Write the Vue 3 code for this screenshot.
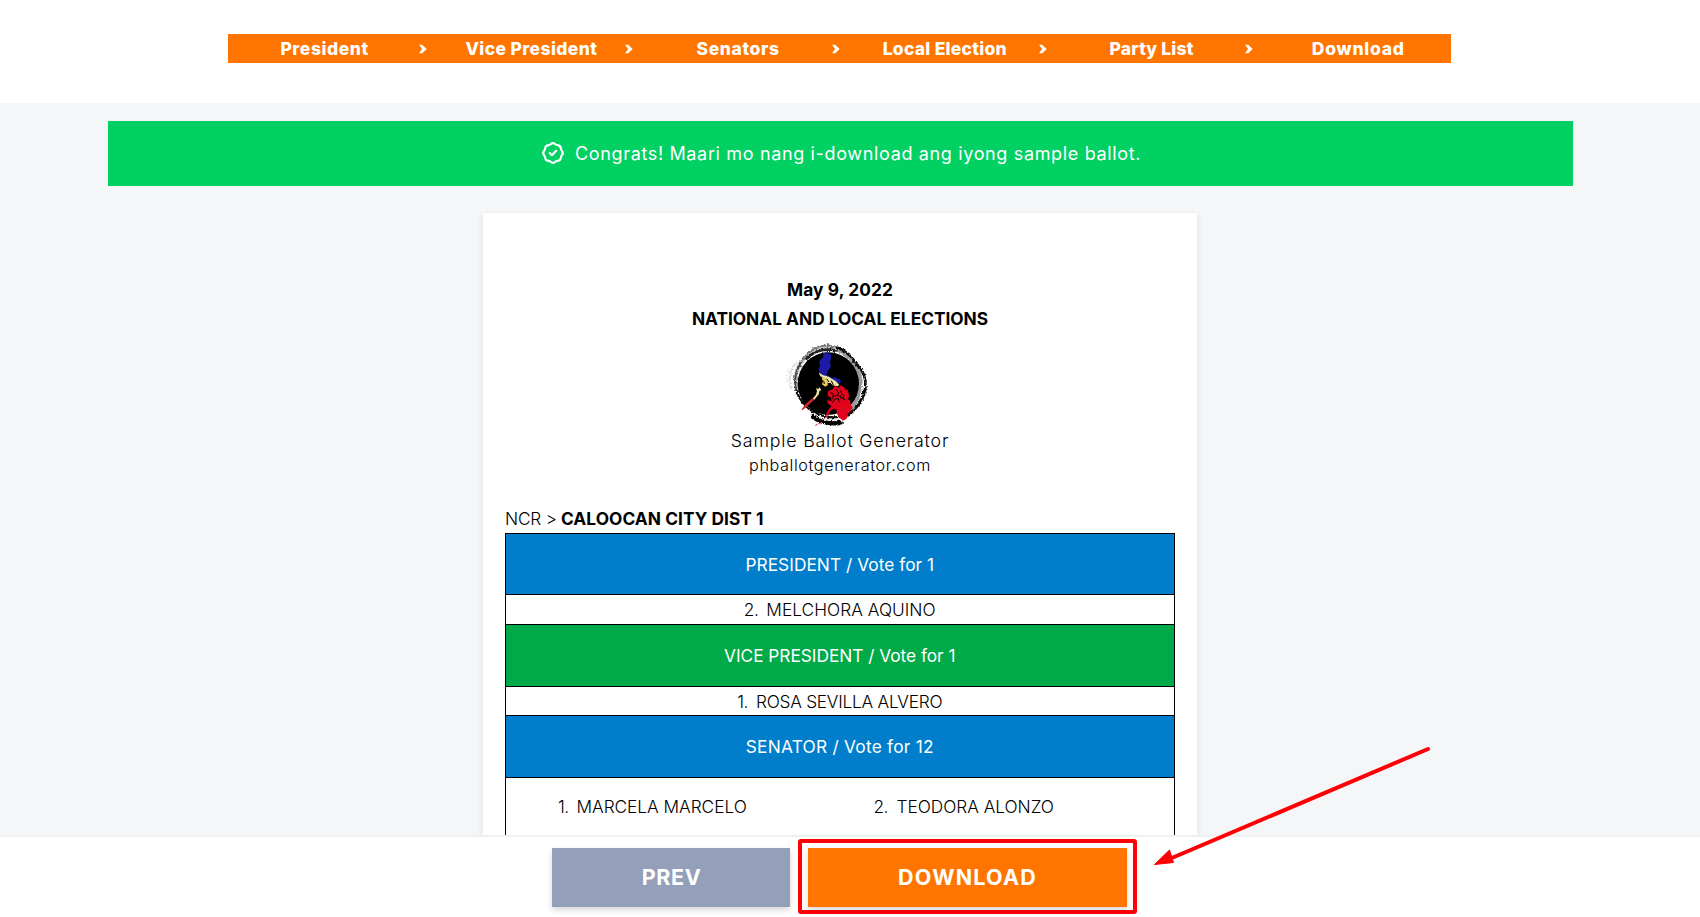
<script setup>
const steps = [
  { label: 'President', tracking: 0.58 },
  { label: 'Vice President', tracking: 0.38 },
  { label: 'Senators', tracking: 0.6 },
  { label: 'Local Election', tracking: 0.26 },
  { label: 'Party List', tracking: 0.15 },
  { label: 'Download', tracking: 0.76 },
]

const races = [
  { title: 'PRESIDENT / Vote for 1', tone: 'blue', tracking: 0.04, number: '2.', name: 'MELCHORA AQUINO', nameTracking: 0.04 },
  { title: 'VICE PRESIDENT / Vote for 1', tone: 'green', tracking: -0.03, number: '1.', name: 'ROSA SEVILLA ALVERO', nameTracking: -0.25 },
]
</script>

<template>
  <div class="page">
    <header class="top">
      <nav class="steps">
        <template v-for="(step, i) in steps" :key="step.label">
          <span v-if="i" class="sep">
            <svg viewBox="0 0 8 10" width="8" height="10"><path d="M1.2 1.4H3L6.8 5 3 8.6H1.2L3.8 5Z" /></svg>
          </span>
          <a class="step" :style="{ letterSpacing: step.tracking + 'px' }">{{ step.label }}</a>
        </template>
      </nav>
    </header>

    <main class="body">
      <div class="banner">
        <svg class="seal" viewBox="0 0 24 24">
          <path d="M9 12l2 2 4-4M7.835 4.697a3.42 3.42 0 001.946-.806 3.42 3.42 0 014.438 0 3.42 3.42 0 001.946.806 3.42 3.42 0 013.138 3.138 3.42 3.42 0 00.806 1.946 3.42 3.42 0 010 4.438 3.42 3.42 0 00-.806 1.946 3.42 3.42 0 01-3.138 3.138 3.42 3.42 0 00-1.946.806 3.42 3.42 0 01-4.438 0 3.42 3.42 0 00-1.946-.806 3.42 3.42 0 01-3.138-3.138 3.42 3.42 0 00-.806-1.946 3.42 3.42 0 010-4.438 3.42 3.42 0 00.806-1.946 3.42 3.42 0 013.138-3.138z" />
        </svg>
        <span>Congrats! Maari mo nang i-download ang iyong sample ballot.</span>
      </div>

      <section class="ballot">
        <h2 class="date">May 9, 2022</h2>
        <h2 class="title">NATIONAL AND LOCAL ELECTIONS</h2>
        <svg class="logo" viewBox="50 36 250 254">
          <defs>
            <filter id="brush" x="-10%" y="-10%" width="120%" height="120%">
              <feTurbulence type="fractalNoise" baseFrequency="0.16" numOctaves="3" seed="4" result="n" />
              <feDisplacementMap in="SourceGraphic" in2="n" scale="11" xChannelSelector="R" yChannelSelector="G" />
            </filter>
          </defs>
          <g filter="url(#brush)" fill="none" stroke-linecap="round">
            <path d="M196 56c40 10 60 44 70 66 12 34 6 84-28 120" stroke="#9a9a9a" stroke-width="14" />
            <path d="M82 180C70 130 92 82 138 60c22-10 46-10 66-4" stroke="#c4c4c4" stroke-width="12" />
            <path d="M98 90C124 54 160 42 188 48c20 3 34 12 44 22" stroke="#777" stroke-width="6" stroke-dasharray="14 2 25 3" />
            <path d="M112 86C134 62 168 54 200 62" stroke="#222" stroke-width="8" stroke-dasharray="22 3 9 2" />
            <path d="M206 54c30 10 46 34 58 52 16 14 27 38 24 66-3 36-24 62-52 84" stroke="#111" stroke-width="8" />
            <path d="M84 96C62 116 56 146 66 176" stroke="#d4d4d4" stroke-width="5" stroke-dasharray="3 6 8 7" />
            <path d="M96 98C80 118 72 150 82 184" stroke="#444" stroke-width="6" stroke-dasharray="12 4 6 3" />
            <path d="M60 116c-8 16-8 30-6 46" stroke="#ccc" stroke-width="2.5" stroke-dasharray="2 8" />
            <path d="M82 184c10 30 36 58 66 68 30 14 66 12 90 2" stroke="#111" stroke-width="7" />
            <path d="M130 260c24 18 62 24 84 18" stroke="#000" stroke-width="13" />
            <path d="M146 262c26 10 46 9 66 3" stroke="#ddd" stroke-width="4" stroke-dasharray="22 4 12 3" />
          </g>
          <ellipse cx="177" cy="161" rx="92" ry="94" />
          <path d="M172 40l6 0-2 8z" fill="#335cc0" />
          <path d="M164 75l6-9 5 8 9-1 2 13-4 12 3 13-8 12-5 13 9 6 10 4 9-2 4 4 8 2 3 8-5 5-6-2-6 3-19-10-14-9-12-13-6-12 5-10-2-13 5-9 5-3z" transform="translate(0 -2)" fill="#1c1ba8" />
          <path d="M148 127l12 8 18 5 22 14 10 11-5 4-15-3-7-8-8 2-7-13-15-8z" fill="#efe6a0" />
          <path d="M157 142l13 5 6 17-8 6-10-7 3-9z" fill="#f1d14b" />
          <path d="M172 146l7 10M186 152l6 13M163 152l2 10" stroke="#000" stroke-width="3" />
          <path d="M151 172l5 9-6 2-1 9-14 17-5-3 10-12 3-11-3-8 7 2z" fill="#eee5a4" />
          <path d="M129 205l6 4-20 18-15 14-3-3 12-16z" fill="#d62232" />
          <path d="M177 183l13-5 7-11 11 6 4-7 13 6 3 9 5-4 4 10 3 13-6 6 8 5 3 14 5 8-8 11-3-6-6 8 1 17-9 8-9-14-9 5-3-12 5-9-17-5-10 8-8 13-5-2 7-15 11-11-13-10 1-9 12 4-2-10-11-8z" fill="#e2041c" />
          <path d="M207 226l14-8 16 4 8 20-8 8-6 16-10 6-14-12-6-18z" fill="#e2041c" />
          <path d="M183 188l10 5-3 8 11-5M199 176l9 13-5 7 9 2M214 181l4 12-6 8 8 6M194 210l12-6 4 13M225 194l-5 10 9 7M187 202l7 8-5 9" fill="none" stroke="#000" stroke-width="2.8" />
          <path d="M182 250l-13 14M166 265l-8 7M154 278l-16 8" stroke="#e2041c" stroke-width="3" fill="none" stroke-dasharray="8 3" />
        </svg>
        <p class="brand">Sample Ballot Generator</p>
        <p class="site">phballotgenerator.com</p>

        <p class="place"><span class="region">NCR &gt;</span><strong>CALOOCAN CITY DIST 1</strong></p>

        <div class="table">
          <template v-for="race in races" :key="race.title">
            <div class="race" :class="race.tone" :style="{ letterSpacing: race.tracking + 'px' }">{{ race.title }}</div>
            <div class="pick">
              <span class="num">{{ race.number }}</span>
              <span :style="{ letterSpacing: race.nameTracking + 'px' }">{{ race.name }}</span>
            </div>
          </template>
          <div class="race blue senator">SENATOR / Vote for 12</div>
          <div class="senators">
            <div class="pick-left"><span class="num one">1.</span><span>MARCELA MARCELO</span></div>
            <div class="pick-left"><span class="num two">2.</span><span>TEODORA ALONZO</span></div>
          </div>
        </div>
      </section>
    </main>

    <footer class="actions">
      <button class="btn prev">PREV</button>
      <div class="marked">
        <button class="btn download">DOWNLOAD</button>
      </div>
    </footer>

    <svg class="arrow" viewBox="0 0 290 130" width="290" height="130">
      <path d="M283 8 L28 116.5" />
      <polygon points="9.5,123.5 24.5,109 28.5,121.5" />
    </svg>
  </div>
</template>

<style>
body {
  margin: 0;
  overflow: hidden;
}
</style>

<style scoped>
.page {
  position: relative;
  display: flex;
  flex-direction: column;
  width: 1700px;
  height: 917px;
  overflow: hidden;
  background: #fff;
  color: #000;
  font-family: Inter, 'Open Sans', sans-serif;
  font-size: 17.3px;
}
.top {
  flex: none;
  height: 103px;
  box-sizing: border-box;
  padding: 33.6px 0 0 227.7px;
}
.steps {
  display: flex;
  align-items: center;
  width: 1223.5px;
  height: 29px;
  background: #ff7500;
  color: #fff;
  font-size: 17.5px;
  font-weight: 800;
}
.step {
  flex: 1;
  box-sizing: border-box;
  padding-left: 4px;
  line-height: 29px;
  height: 29px;
  text-align: center;
  white-space: nowrap;
}
.sep {
  flex: none;
  width: 16.9px;
  display: flex;
}
.sep svg {
  margin: 1px 0 0 1px;
  fill: #fff;
  stroke: #fff;
  stroke-width: 1.2;
}
.body {
  flex: none;
  height: 732px;
  overflow: hidden;
  background: #f5f6f8;
}
.banner {
  display: flex;
  align-items: center;
  width: 1465px;
  height: 64.5px;
  box-sizing: border-box;
  margin: 18px 0 0 107.5px;
  padding-left: 432.5px;
  background: #01d063;
  color: #fff;
  font-size: 18px;
  letter-spacing: 0.65px;
  white-space: nowrap;
}
.seal {
  width: 26px;
  height: 26px;
  margin: -1px 9px 0 0;
  fill: none;
  stroke: #fff;
  stroke-width: 2;
  stroke-linecap: round;
  stroke-linejoin: round;
}
.ballot {
  width: 714px;
  height: 700px;
  box-sizing: border-box;
  margin: 27px 0 0 483px;
  padding: 62px 22px 0;
  background: #fff;
  box-shadow: 0 3px 6px rgba(40, 50, 70, 0.12);
  text-align: center;
}
.ballot h2,
.ballot p {
  margin: 0;
  font-size: 17.3px;
}
.ballot h2 {
  height: 29px;
  line-height: 29px;
  font-weight: 650;
}
.ballot .date {
  letter-spacing: 0.12px;
}
.ballot .title {
  letter-spacing: 0;
}
.logo {
  display: block;
  width: 83.3px;
  height: 84.7px;
  margin: 9px 0 0 281px;
}
.ballot .brand {
  height: 26px;
  line-height: 27px;
  margin-top: 1px;
  font-size: 17.8px;
  font-weight: 300;
  letter-spacing: 0.81px;
}
.ballot .site {
  height: 24px;
  line-height: 24px;
  font-size: 16.2px;
  font-weight: 300;
  letter-spacing: 0.61px;
}
.ballot .place {
  display: flex;
  height: 28px;
  margin-top: 27.5px;
  line-height: 28px;
}
.region {
  width: 56px;
  text-align: left;
  font-weight: 300;
  letter-spacing: -0.2px;
}
.place strong {
  font-weight: 650;
  letter-spacing: 0.06px;
}
.table {
  height: 400px;
  width: 669.5px;
  box-sizing: border-box;
  border: 1px solid #000;
  font-weight: 300;
}
.race {
  height: 60.6px;
  border-bottom: 1px solid #000;
  line-height: 61px;
  color: #fff;
  font-weight: 430;
}
.blue {
  background: #007ecb;
}
.green {
  background: #00aa48;
}
.senator {
  letter-spacing: 0.24px;
}
.pick {
  display: flex;
  justify-content: center;
  gap: 8px;
  height: 28.7px;
  border-bottom: 1px solid #000;
  line-height: 29px;
}
.num {
  letter-spacing: -0.5px;
}
.senators {
  display: grid;
  grid-template-columns: 315.5px 1fr;
  padding-left: 52px;
  line-height: 58px;
}
.pick-left {
  display: flex;
  text-align: left;
}
.pick-left span + span {
  letter-spacing: -0.03px;
}
.one {
  width: 18.5px;
}
.two {
  width: 23px;
}
.actions {
  position: relative;
  flex: none;
  display: flex;
  align-items: flex-start;
  height: 82px;
  box-sizing: border-box;
  padding-left: 552px;
  border-top: 2px solid #f0f0f1;
  background: #fff;
}
.btn {
  display: block;
  height: 59px;
  padding: 0 0 2px;
  border: 0;
  color: #fff;
  font-family: inherit;
  font-size: 21.5px;
  font-weight: 750;
  box-shadow: 0 3px 6px rgba(0, 0, 0, 0.16);
}
.prev {
  width: 238px;
  margin-top: 11px;
  padding-left: 1px;
  background: #94a0b9;
  letter-spacing: 0.6px;
}
.marked {
  width: 339px;
  height: 75px;
  box-sizing: border-box;
  margin: 2px 0 0 8px;
  padding: 5px 0 0 6.3px;
  border: 4px solid #ff0006;
  border-radius: 3px;
}
.download {
  width: 318.6px;
  background: #ff7500;
  letter-spacing: 1.25px;
}
.arrow {
  position: absolute;
  left: 1145px;
  top: 741px;
  fill: #ff0006;
}
.arrow path {
  stroke: #ff0006;
  stroke-width: 4;
  stroke-linecap: round;
}
.arrow polygon {
  stroke: #ff0006;
  stroke-width: 1;
  stroke-linejoin: round;
}
</style>
